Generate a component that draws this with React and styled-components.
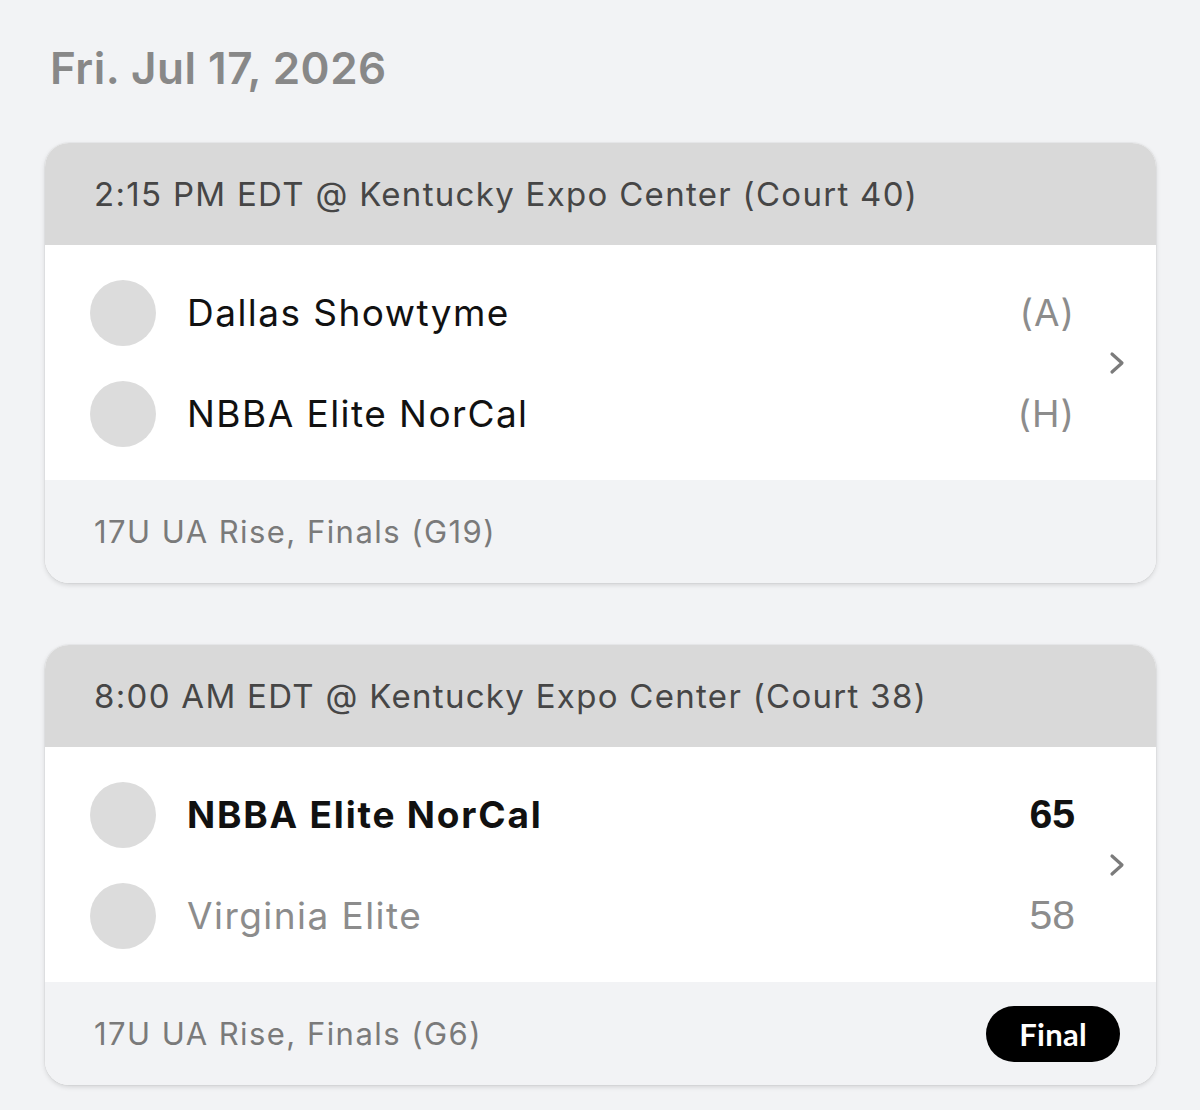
import styled, { createGlobalStyle } from 'styled-components'

const GlobalStyle = createGlobalStyle`
  html, body {
    margin: 0;
    padding: 0;
    background: #f2f3f5;
    font-family: Inter, "Noto Sans", sans-serif;
  }
`;

const Page = styled.div`
  padding: 40px 44px 24px 45px;
  display: flex;
  flex-direction: column;
`;

const DateTitle = styled.h1`
  margin: 0 0 47px 5px;
  font-size: 44px;
  line-height: 56px;
  font-weight: 600;
  color: #888888;
  letter-spacing: 0.5px;
`;

const Card = styled.div`
  border-radius: 24px;
  overflow: hidden;
  background: #ffffff;
  box-shadow: 0 2px 5px rgba(0, 0, 0, 0.13), 0 0 0 1px rgba(0, 0, 0, 0.03);
  margin-bottom: 62px;

  &:last-child {
    margin-bottom: 0;
  }
`;

const Header = styled.div`
  height: 102px;
  background: #d9d9d9;
  display: flex;
  align-items: center;
  padding-left: 49px;
  font-size: 33px;
  letter-spacing: 1.3px;
  color: #464646;
`;

const Body = styled.div`
  display: flex;
  align-items: center;
  padding: 17px 29px 16px 45px;
  background: #ffffff;
`;

const Teams = styled.div`
  flex: 1;
  display: flex;
  flex-direction: column;
`;

const Row = styled.div`
  height: 101px;
  display: flex;
  align-items: center;
`;

const Logo = styled.div`
  width: 66px;
  height: 66px;
  border-radius: 50%;
  background: #dcdcdc;
  flex-shrink: 0;
`;

const Name = styled.div`
  flex: 1;
  margin-left: 31px;
  font-size: 37px;
  letter-spacing: ${p => (p.$bold ? '1.8px' : '1.45px')};
  font-weight: ${p => (p.$bold ? 700 : 400)};
  color: ${p => (p.$faded ? '#8c8c8c' : '#111111')};
`;

const Side = styled.div`
  font-size: 37px;
  letter-spacing: 1px;
  color: #8c8c8c;
`;

const Score = styled.div`
  font-family: "Liberation Sans", Arial, sans-serif;
  font-size: 41px;
  font-weight: ${p => (p.$bold ? 700 : 400)};
  color: ${p => (p.$faded ? '#8c8c8c' : '#111111')};
`;

const Chevron = styled.svg`
  width: 20px;
  height: 28px;
  margin-left: 32px;
  flex-shrink: 0;
`;

const Footer = styled.div`
  height: 103px;
  background: #f2f3f5;
  display: flex;
  align-items: center;
  justify-content: space-between;
  padding: 0 36px 0 49px;
  font-size: 31px;
  letter-spacing: 1.45px;
  color: #7a7a7a;
`;

const Badge = styled.div`
  height: 56px;
  padding: 0 33px;
  border-radius: 28px;
  background: #000000;
  color: #ffffff;
  font-family: Lato, "Noto Sans", sans-serif;
  font-weight: 700;
  font-size: 31px;
  letter-spacing: 0.3px;
  display: flex;
  align-items: center;
`;

const games = [
  {
    header: '2:15 PM EDT @ Kentucky Expo Center (Court 40)',
    footer: '17U UA Rise, Finals (G19)',
    teams: [
      { name: 'Dallas Showtyme', side: '(A)' },
      { name: 'NBBA Elite NorCal', side: '(H)' },
    ],
  },
  {
    header: '8:00 AM EDT @ Kentucky Expo Center (Court 38)',
    footer: '17U UA Rise, Finals (G6)',
    final: true,
    teams: [
      { name: 'NBBA Elite NorCal', score: 65, winner: true },
      { name: 'Virginia Elite', score: 58, loser: true },
    ],
  },
];

function ChevronIcon() {
  return (
    <Chevron viewBox="0 0 20 28" fill="none">
      <path d="M5 5 L15 14 L5 23" stroke="#7b7b7b" strokeWidth="3.2" strokeLinecap="round" strokeLinejoin="round" />
    </Chevron>
  );
}

function GameCard({ game }) {
  return (
    <Card>
      <Header>{game.header}</Header>
      <Body>
        <Teams>
          {game.teams.map(t => (
            <Row key={t.name}>
              <Logo />
              <Name $bold={t.winner} $faded={t.loser}>{t.name}</Name>
              {t.score != null ? (
                <Score $bold={t.winner} $faded={t.loser}>{t.score}</Score>
              ) : (
                <Side>{t.side}</Side>
              )}
            </Row>
          ))}
        </Teams>
        <ChevronIcon />
      </Body>
      <Footer>
        <span>{game.footer}</span>
        {game.final && <Badge>Final</Badge>}
      </Footer>
    </Card>
  );
}

export default function App() {
  return (
    <>
      <GlobalStyle />
      <Page>
        <DateTitle>Fri. Jul 17, 2026</DateTitle>
        {games.map(g => (
          <GameCard key={g.header} game={g} />
        ))}
      </Page>
    </>
  );
}
